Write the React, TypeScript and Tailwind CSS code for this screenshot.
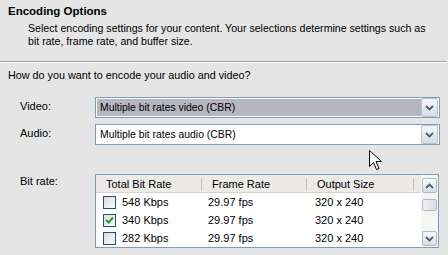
import React from "react";

const font = "font-['Tahoma','Liberation_Sans',Arial,sans-serif]";

const Chevron = ({ up = false }: { up?: boolean }) => (
  <svg width="9" height="6" viewBox="0 0 9 6">
    <path
      d={up ? "M1 5 L4.5 1.5 L8 5" : "M1 1 L4.5 4.5 L8 1"}
      fill="none"
      stroke="#4d5b74"
      strokeWidth="1.8"
    />
  </svg>
);

const DropButton = () => (
  <div className="w-[17px] h-[19px] flex items-center justify-center border border-[#b8c2d2] rounded-[2px] bg-gradient-to-b from-[#f6f6f8] to-[#d9dce4]">
    <Chevron />
  </div>
);

const Combo = ({ value, selected }: { value: string; selected?: boolean }) => (
  <div className="w-[345px] h-[21px] bg-white border border-[#7f9db9] flex items-center pl-[1px] pr-[1px]">
    <div
      className={
        "flex-1 h-[17px] flex items-center pl-[3px] text-[10.4px] " +
        (selected ? "bg-[#b5b6c0]" : "")
      }
    >
      {value}
    </div>
    <DropButton />
  </div>
);

const Checkbox = ({ checked }: { checked?: boolean }) => (
  <div className="w-[13px] h-[13px] border border-[#1c5180] bg-gradient-to-br from-[#dcdcd7] to-[#fcfcfb] flex items-center justify-center">
    {checked && (
      <svg width="9" height="8" viewBox="0 0 9 8">
        <path d="M1 4 L3.5 6.5 L8 1.5" fill="none" stroke="#21a121" strokeWidth="2" />
      </svg>
    )}
  </div>
);

const rates = [
  { rate: "548 Kbps", checked: false },
  { rate: "340 Kbps", checked: true },
  { rate: "282 Kbps", checked: false },
];

const ScrollBtn = ({ up }: { up?: boolean }) => (
  <div className="w-[15px] h-[15px] flex items-center justify-center border border-[#b0b8c8] rounded-[2px] bg-gradient-to-b from-[#fbfbfc] to-[#dadce3]">
    <Chevron up={up} />
  </div>
);

export default function App() {
  return (
    <div
      className={`${font} relative w-[448px] h-[255px] overflow-hidden bg-[#e5e5e5] text-[11px] leading-[13px] text-black`}
    >
      <div className="pt-[5px] h-[61px]">
        <div className="pl-[8px] font-bold text-[11.5px]">Encoding Options</div>
        <div className="pl-[28px] pt-[4px] pr-[8px] text-[10.6px] leading-[13px]">
          Select encoding settings for your content. Your selections determine settings such as
          <br />
          bit rate, frame rate, and buffer size.
        </div>
      </div>
      <div className="border-t border-[#a3a3a3] border-b border-b-white mr-[1px]" />

      <div className="pl-[8px] pt-[6px] text-[10.8px]">How do you want to encode your audio and video?</div>

      <div className="flex items-center mt-[15px]">
        <div className="w-[95px] pl-[20px] pb-[2px]">Video:</div>
        <Combo value="Multiple bit rates video (CBR)" selected />
      </div>
      <div className="flex items-center mt-[6px]">
        <div className="w-[95px] pl-[20px] pb-[2px]">Audio:</div>
        <Combo value="Multiple bit rates audio (CBR)" />
      </div>

      <div className="flex mt-[29px]">
        <div className="w-[95px] pl-[20px] pt-[1px]">Bit rate:</div>
        <div className="w-[344px] h-[74px] border border-[#7f9db9] bg-white flex overflow-hidden">
          <div className="flex-1 flex flex-col">
            <div className="h-[19px] flex bg-[#ebeae7] border-b border-[#d6d3ca] pt-[2px]">
              <div className="w-[106px] pl-[10px] border-r border-[#c7c5b2] my-[1px] flex items-center">Total Bit Rate</div>
              <div className="w-[105px] pl-[10px] border-r border-[#c7c5b2] my-[1px] flex items-center">Frame Rate</div>
              <div className="w-[107px] pl-[10px] border-r border-[#c7c5b2] my-[1px] flex items-center">Output Size</div>
            </div>
            {rates.map((r) => (
              <div key={r.rate} className="h-[18px] flex items-center shrink-0">
                <div className="w-[106px] pl-[7px] flex items-center gap-[6px]">
                  <Checkbox checked={r.checked} />
                  <span>{r.rate}</span>
                </div>
                <div className="w-[105px] pl-[6px]">29.97 fps</div>
                <div className="w-[107px] pl-[8px]">320 x 240</div>
              </div>
            ))}
          </div>
          <div className="w-[17px] flex flex-col items-center bg-[#f5f5f2] pt-[3px] pb-[1px]">
            <ScrollBtn up />
            <div className="flex-1 w-full flex flex-col items-center pt-[6px]">
              <div className="w-[15px] h-[12px] border border-[#b0b8c8] rounded-[2px] bg-gradient-to-r from-[#f0f0f3] to-[#dcdee5]" />
            </div>
            <ScrollBtn />
          </div>
        </div>
      </div>

      <svg
        className="absolute left-[369px] top-[150px]"
        width="14"
        height="22"
        viewBox="0 0 14 22"
      >
        <path
          d="M0.5 0.5 L0.5 16.5 L4.5 12.5 L7.5 19.5 L10 18.5 L7 11.5 L12.5 11.5 Z"
          fill="white"
          stroke="black"
          strokeWidth="1"
        />
      </svg>
    </div>
  );
}
